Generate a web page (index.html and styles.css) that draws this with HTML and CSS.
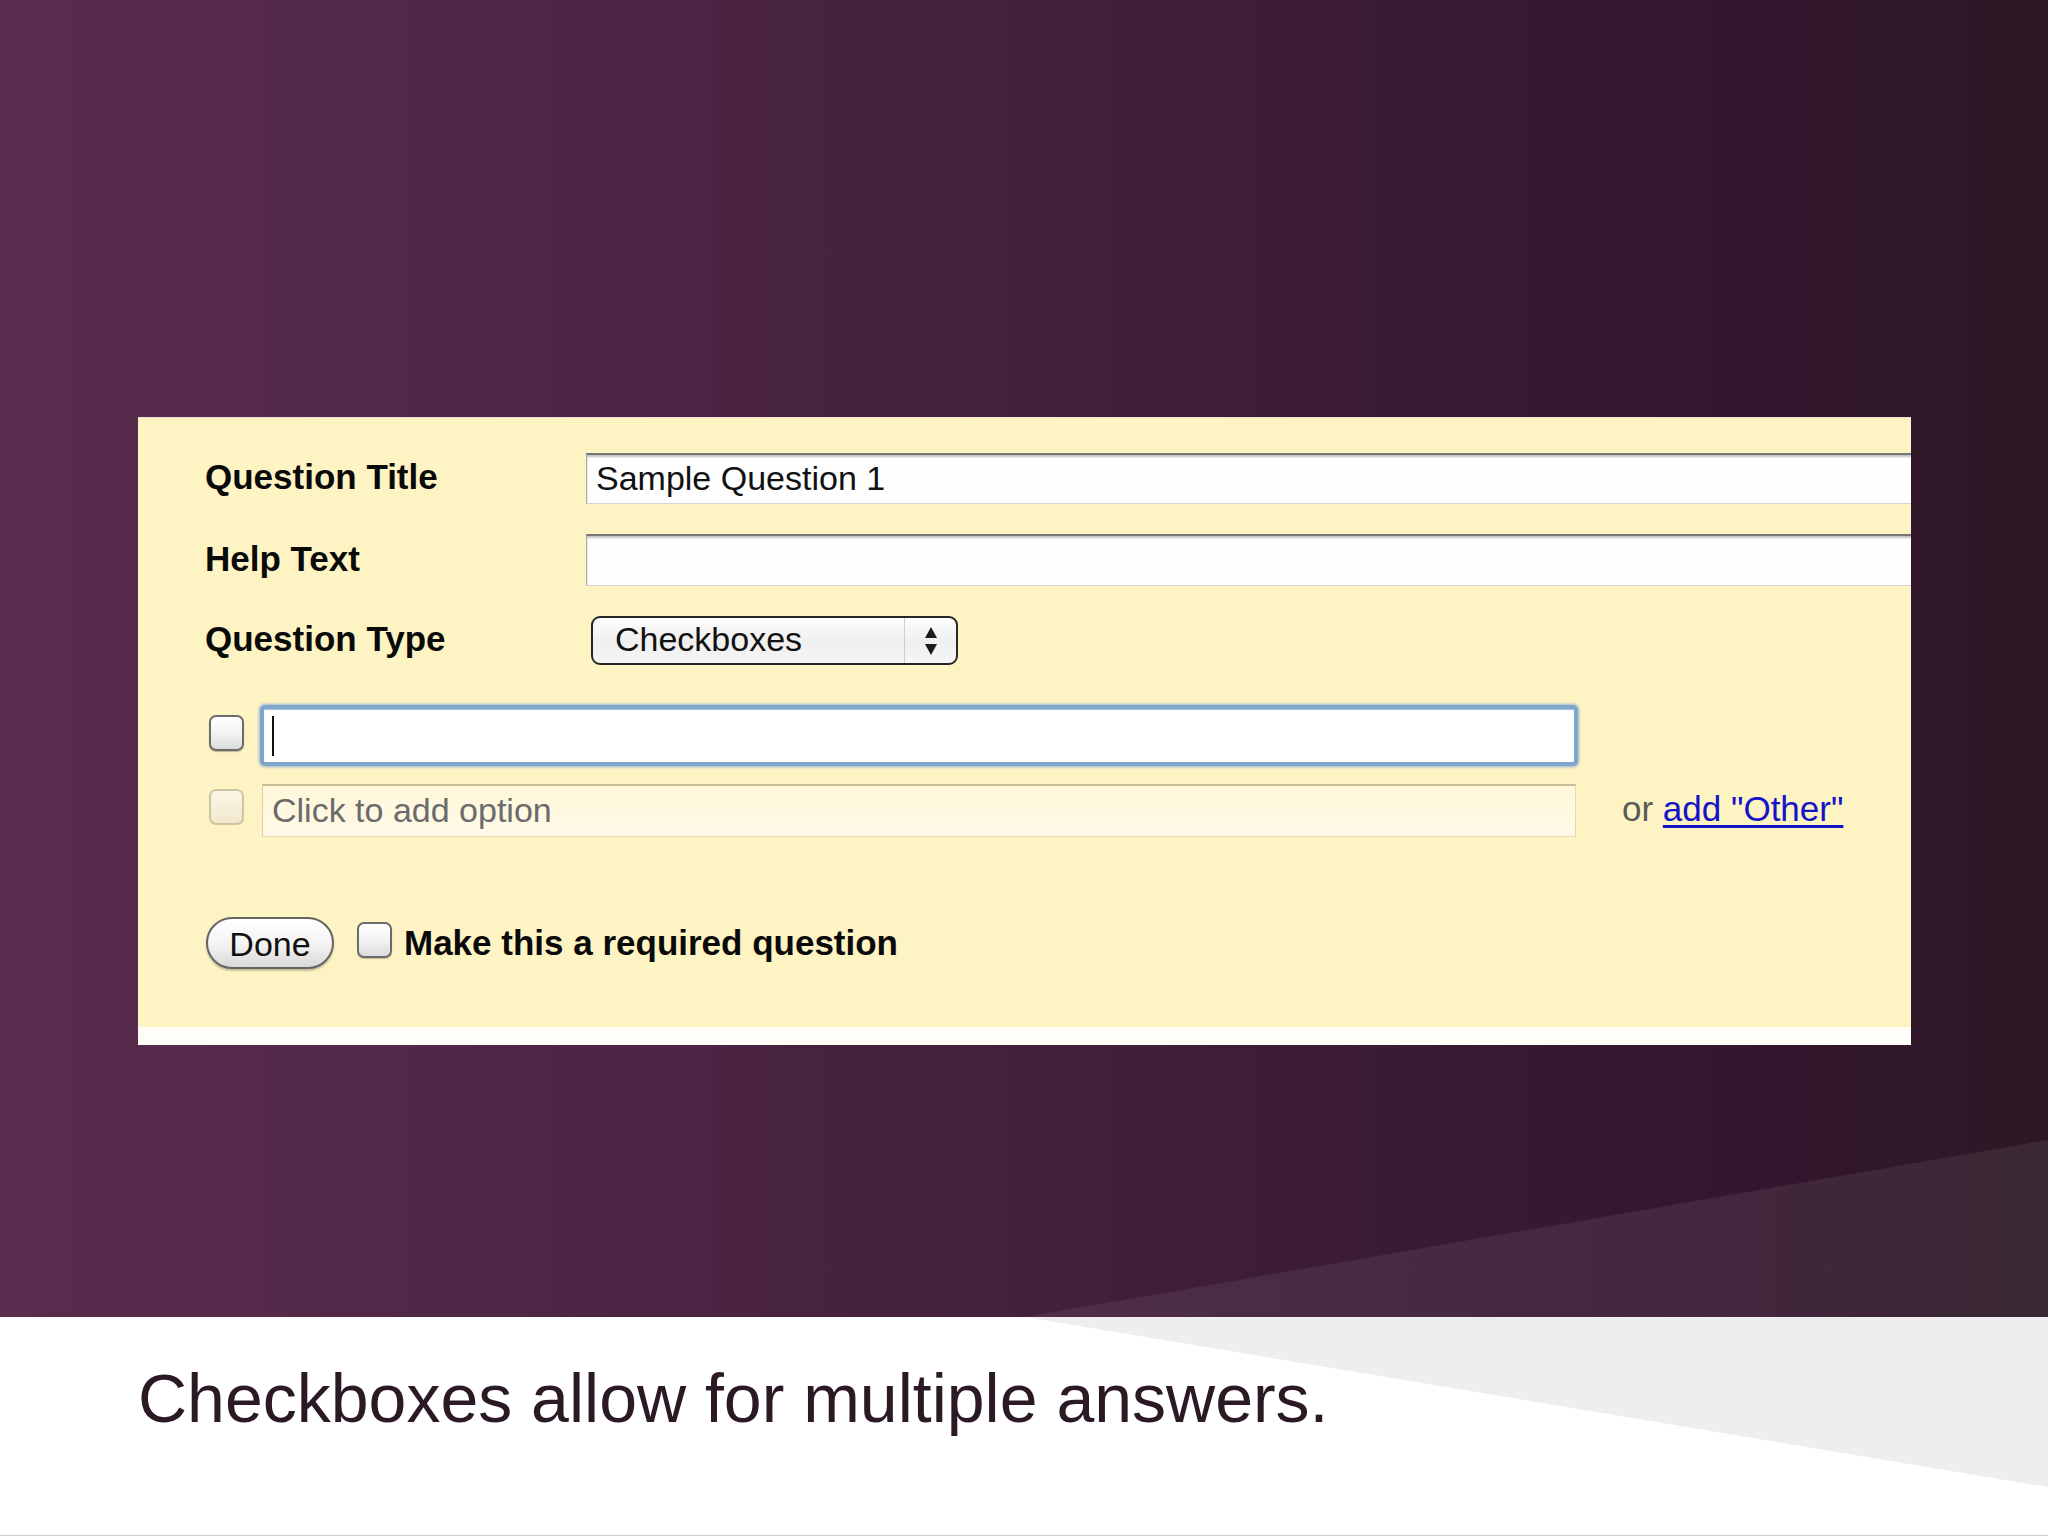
FILE: index.html
```html
<!DOCTYPE html>
<html>
<head>
<meta charset="utf-8">
<title>Checkboxes</title>
<link rel="stylesheet" href="styles.css">
</head>
<body>
  <div class="slide">
    <div class="card">
      <div class="panel">
        <div class="form">
          <div class="label">Question Title</div>
          <div class="text-input">Sample Question 1</div>
          <div class="label">Help Text</div>
          <div class="text-input"></div>
          <div class="label">Question Type</div>
          <div class="select-cell">
            <div class="select">
              <span class="select-value">Checkboxes</span>
              <span class="select-arrows">
                <svg width="14" height="28" viewBox="0 0 14 28"><polygon points="7,0 13,11 1,11" fill="#1a1a1a"/><polygon points="1,17 13,17 7,28" fill="#1a1a1a"/></svg>
              </span>
            </div>
          </div>
        </div>
        <div class="options">
          <div class="option-row">
            <span class="cb"></span>
            <div class="focus-input"><span class="caret"></span></div>
          </div>
          <div class="option-row second">
            <span class="cb cb-faded"></span>
            <div class="add-input">Click to add option</div>
            <span class="or">or <a class="other-link">add "Other"</a></span>
          </div>
        </div>
        <div class="actions">
          <span class="done-btn">Done</span>
          <span class="cb req-cb"></span>
          <span class="req-label">Make this a required question</span>
        </div>
      </div>
      <div class="panel-foot"></div>
    </div>
  </div>
  <div class="caption">
    <p class="caption-text">Checkboxes allow for multiple answers.</p>
  </div>
</body>
</html>
```

FILE: styles.css
```css
html, body {
  margin: 0;
  padding: 0;
}
body {
  width: 2048px;
  height: 1536px;
  overflow: hidden;
  font-family: "Liberation Sans", Arial, sans-serif;
}

.slide {
  position: relative;
  height: 1317px;
  box-sizing: border-box;
  padding: 417px 0 0 138px;
  background: linear-gradient(to right, #5a2c4e 0%, #4d2645 28%, #43203b 50%, #391a33 70%, #34162f 85%, #2c1824 100%);
  overflow: hidden;
}
.slide::after {
  content: "";
  position: absolute;
  left: 0;
  top: 0;
  width: 2048px;
  height: 1317px;
  background: rgba(255, 255, 255, 0.07);
  clip-path: polygon(1025px 1317px, 2048px 1140px, 2048px 1317px);
  pointer-events: none;
}

.card {
  width: 1773px;
  overflow: hidden;
}
.panel {
  background: #fef3c3;
  height: 610px;
  box-sizing: border-box;
  padding: 35px 0 0 67px;
  border-top: 1px solid #f3dede;
}
.panel-foot {
  height: 18px;
  background: #fffdf8;
}

.form {
  display: grid;
  grid-template-columns: 381px 1fr;
  grid-template-rows: 51px 52px 49px;
  row-gap: 30px;
  align-items: center;
}
.label {
  font-weight: bold;
  font-size: 35px;
  color: #0a0a0a;
  margin-top: -3px;
}
.text-input {
  height: 100%;
  box-sizing: border-box;
  margin-right: -3px;
  background: #fefefe;
  border-top: 2px solid #777;
  border-left: 1px solid #a8a8a8;
  border-right: 1px solid #a8a8a8;
  border-bottom: 1px solid #d4d4d4;
  box-shadow: inset 0 2px 2px #c2c2c2;
  display: flex;
  align-items: center;
  padding: 0 0 2px 9px;
  font-size: 34px;
  color: #111;
}
.select-cell {
  height: 100%;
}
.select {
  margin-left: 5px;
  width: 367px;
  height: 49px;
  box-sizing: border-box;
  border: 2px solid #262626;
  border-radius: 9px;
  background: linear-gradient(#fdfdfd, #efefef 55%, #f6f6f6);
  display: flex;
  align-items: center;
}
.select-value {
  flex: 1;
  padding: 0 0 2px 22px;
  font-size: 34px;
  color: #111;
}
.select-arrows {
  width: 51px;
  height: 100%;
  border-left: 1px solid #cfcfcf;
  display: flex;
  align-items: center;
  justify-content: center;
}

.options {
  margin-top: 40px;
}
.option-row {
  display: flex;
  align-items: center;
  height: 61px;
}
.option-row.second {
  margin-top: 18px;
  height: 53px;
}
.cb {
  display: inline-block;
  width: 35px;
  height: 36px;
  box-sizing: border-box;
  border: 2px solid #6b6b6b;
  border-radius: 7px;
  background: linear-gradient(#ffffff, #f3f3f3 50%, #dcdcdc);
  box-shadow: 0 1px 1px rgba(0, 0, 0, 0.25);
  flex: none;
}
.option-row .cb {
  margin-left: 4px;
  margin-top: -5px;
}
.cb-faded {
  border-color: #cec5a3;
  background: linear-gradient(#fbf6e5, #f1e8cd);
  box-shadow: none;
}
.option-row.second .cb {
  margin-top: -7px;
}
.focus-input {
  margin-left: 16px;
  width: 1318px;
  height: 61px;
  box-sizing: border-box;
  border: 4px solid #7fa7cb;
  border-radius: 5px;
  box-shadow: 0 0 3px 1px #97b7d4, inset 0 1px 1px #a9bccc;
  background: #ffffff;
  display: flex;
  align-items: center;
}
.caret {
  display: block;
  width: 2px;
  height: 40px;
  margin-left: 8px;
  background: #111;
}
.add-input {
  margin-left: 18px;
  width: 1314px;
  height: 53px;
  box-sizing: border-box;
  background: linear-gradient(#fff7da, #fffae8);
  border-top: 2px solid #c8bc94;
  border-left: 1px solid #d9cfa8;
  border-right: 1px solid #e2d9b6;
  border-bottom: 1px solid #e6ddbb;
  display: flex;
  align-items: center;
  padding: 0 0 2px 9px;
  font-size: 34px;
  color: #6b6b6b;
}
.or {
  margin-left: 46px;
  margin-top: -4px;
  font-size: 35px;
  color: #595959;
}
.other-link {
  color: #1414c8;
  text-decoration: underline;
  text-decoration-thickness: 3px;
  text-underline-offset: 4px;
}

.actions {
  margin-top: 80px;
  display: flex;
  align-items: center;
  height: 52px;
}
.done-btn {
  margin-left: 1px;
  width: 128px;
  height: 52px;
  box-sizing: border-box;
  border: 2px solid #646464;
  border-radius: 26px;
  background: linear-gradient(#ffffff, #f4f4f4 50%, #d9d9d9);
  box-shadow: 0 2px 2px rgba(0, 0, 0, 0.22);
  display: flex;
  align-items: center;
  justify-content: center;
  padding-top: 2px;
  font-size: 34px;
  color: #111;
}
.req-cb {
  margin-left: 23px;
  margin-top: -6px;
}
.req-label {
  margin-left: 12px;
  font-weight: bold;
  font-size: 35px;
  color: #0a0a0a;
}

.caption {
  position: relative;
  height: 219px;
  box-sizing: border-box;
  background: #ffffff;
  border-bottom: 1px solid #cfcfcf;
  padding: 47px 0 0 138px;
  overflow: hidden;
}
.caption::before {
  content: "";
  position: absolute;
  left: 0;
  top: 0;
  width: 2048px;
  height: 219px;
  background: #efedf0;
  clip-path: polygon(1025px 0, 2048px 0, 2048px 170px);
}
.caption-text {
  position: relative;
  margin: 0;
  font-size: 68px;
  line-height: 1;
  color: #2b1a26;
}
```
